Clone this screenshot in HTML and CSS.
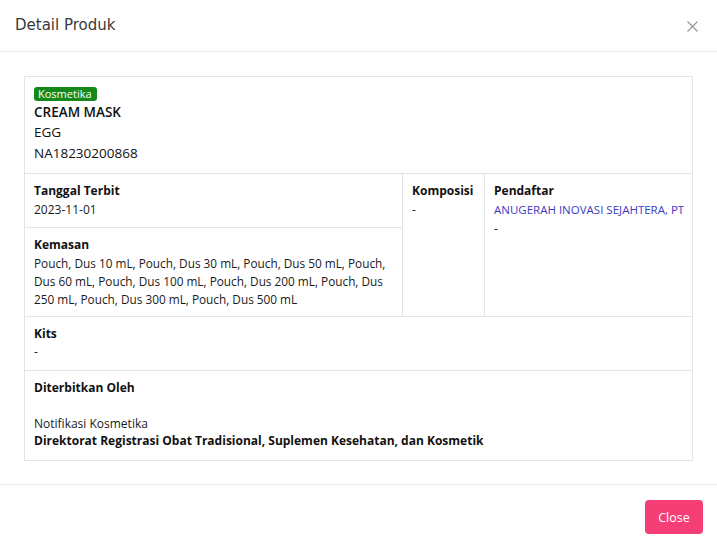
FILE: index.html
```html
<!DOCTYPE html>
<html>
<head>
<meta charset="utf-8">
<link rel="stylesheet" href="styles.css">
</head>
<body>
<div class="modal">
  <div class="modal-header">
    <h5 class="modal-title">Detail Produk</h5>
    <button class="btn-x" aria-label="Close">
      <svg width="11" height="11" viewBox="0 0 11 11"><path d="M0.5 0.5 L10.5 10.5 M10.5 0.5 L0.5 10.5" stroke="#9a9a9a" stroke-width="1.2" fill="none"/></svg>
    </button>
  </div>
  <div class="modal-body">
    <div class="detail">
      <div class="cell head-cell">
        <div class="badge-wrap"><span class="badge">Kosmetika</span></div>
        <div class="prod-name">CREAM MASK</div>
        <div class="prod-line">EGG</div>
        <div class="prod-line">NA18230200868</div>
      </div>
      <div class="row-three">
        <div class="col-left">
          <div class="cell c-tanggal">
            <div class="label">Tanggal Terbit</div>
            <div class="value">2023-11-01</div>
          </div>
          <div class="cell c-kemasan">
            <div class="label">Kemasan</div>
            <div class="value tight">Pouch, Dus 10 mL, Pouch, Dus 30 mL, Pouch, Dus 50 mL, Pouch, Dus 60 mL, Pouch, Dus 100 mL, Pouch, Dus 200 mL, Pouch, Dus 250 mL, Pouch, Dus 300 mL, Pouch, Dus 500 mL</div>
          </div>
        </div>
        <div class="cell c-komposisi">
          <div class="label">Komposisi</div>
          <div class="value">-</div>
        </div>
        <div class="cell c-pendaftar">
          <div class="label">Pendaftar</div>
          <div class="value link">ANUGERAH INOVASI SEJAHTERA, PT</div>
          <div class="value">-</div>
        </div>
      </div>
      <div class="cell c-kits">
        <div class="label">Kits</div>
        <div class="value short">-</div>
      </div>
      <div class="cell c-terbit">
        <div class="label">Diterbitkan Oleh</div>
        <div class="spacer"></div>
        <div class="value short">Notifikasi Kosmetika</div>
        <div class="label short">Direktorat Registrasi Obat Tradisional, Suplemen Kesehatan, dan Kosmetik</div>
      </div>
    </div>
  </div>
  <div class="modal-footer">
    <button class="btn-close">Close</button>
  </div>
</div>
</body>
</html>
```

FILE: styles.css
```css
* { box-sizing: border-box; }
html, body {
  margin: 0;
  padding: 0;
  background: #fff;
}
body {
  font-family: "Open Sans", "Noto Sans", sans-serif;
  color: #111;
  width: 717px;
  height: 548px;
  overflow: hidden;
}
.modal {
  display: flex;
  flex-direction: column;
}
.modal-header {
  height: 52px;
  border-bottom: 1px solid #e9e9e9;
  display: flex;
  align-items: center;
  justify-content: space-between;
  padding: 0 19px 2px 15px;
}
.modal-title {
  margin: 0;
  font-family: "DejaVu Sans", sans-serif;
  font-size: 15px;
  font-weight: 500;
  color: #3a3a3a;
}
.btn-x {
  border: 0;
  background: none;
  padding: 0;
  display: flex;
  margin-top: 3px;
}
.modal-body {
  padding: 24px 24px 23px;
}
.detail {
  border: 1px solid #e4e4e4;
  border-bottom: 0;
}
.cell {
  padding: 7px 9px 9px;
  font-size: 12px;
}
.head-cell {
  border-bottom: 1px solid #e4e4e4;
  padding: 10px 9px 8px;
  height: 97px;
}
.badge-wrap {
  line-height: 14px;
  height: 14px;
}
.badge {
  display: inline-block;
  background: #14891a;
  color: #fff;
  font-size: 11px;
  font-weight: 500;
  line-height: 14px;
  padding: 0 5px 0 4px;
  border-radius: 3px;
  vertical-align: top;
}
.prod-name {
  font-size: 13.5px;
  font-weight: 600;
  line-height: 20px;
  margin-top: 1px;
}
.prod-line {
  font-size: 13.5px;
  line-height: 20.5px;
}
.row-three {
  display: grid;
  grid-template-columns: 378px 82px 1fr;
  border-bottom: 1px solid #e4e4e4;
  height: 143px;
}
.col-left {
  border-right: 1px solid #e4e4e4;
  display: flex;
  flex-direction: column;
}
.c-tanggal {
  height: 54px;
  border-bottom: 1px solid #e4e4e4;
}
.c-komposisi {
  border-right: 1px solid #e4e4e4;
}
.label {
  font-weight: 700;
  font-size: 12px;
  line-height: 19px;
}
.value {
  font-size: 12px;
  line-height: 19px;
  color: #1a1a1a;
}
.value.tight {
  font-size: 11.8px;
  line-height: 18px;
}
.value.short, .label.short {
  line-height: 17px;
}
.link {
  color: #3b3bbf;
  font-size: 11.5px;
  white-space: nowrap;
}
.c-kits {
  height: 54px;
  border-bottom: 1px solid #e4e4e4;
}
.c-terbit {
  height: 90px;
  border-bottom: 1px solid #e4e4e4;
}
.spacer {
  height: 18px;
}
.modal-footer {
  border-top: 1px solid #e9e9e9;
  display: flex;
  justify-content: flex-end;
  padding: 15px 14px 0;
}
.btn-close {
  border: 0;
  background: #f53d76;
  color: #fff;
  font-family: inherit;
  font-size: 12.5px;
  font-weight: 500;
  border-radius: 4px;
  width: 58px;
  height: 34px;
}
```
